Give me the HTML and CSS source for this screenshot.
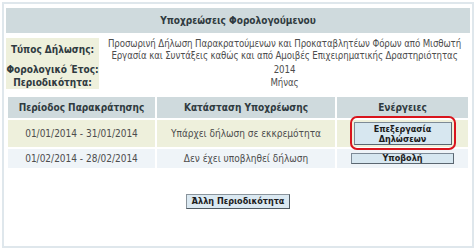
FILE: index.html
```
<!DOCTYPE html>
<html lang="el">
<head>
  <meta charset="UTF-8">
  <meta name="viewport" content="width=device-width, initial-scale=1.0">
  <title>Υποχρεώσεις Φορολογούμενου</title>
  <link rel="stylesheet" href="styles.css">
</head>
<body>
  <div class="frame">
    <div class="title-bar">Υποχρεώσεις Φορολογούμενου</div>

    <table class="info">
      <tr class="info-first">
        <td class="info-label">Τύπος Δήλωσης:</td>
        <td class="info-value">Προσωρινή Δήλωση Παρακρατούμενων και Προκαταβλητέων Φόρων από Μισθωτή<br>Εργασία και Συντάξεις καθώς και από Αμοιβές Επιχειρηματικής Δραστηριότητας</td>
      </tr>
      <tr class="info-year">
        <td class="info-label">Φορολογικό Έτος:</td>
        <td class="info-value">2014</td>
      </tr>
      <tr>
        <td class="info-label">Περιοδικότητα:</td>
        <td class="info-value">Μήνας</td>
      </tr>
    </table>

    <table class="periods">
      <tr class="head-row">
        <th class="col-period">Περίοδος Παρακράτησης</th>
        <th class="col-status">Κατάσταση Υποχρέωσης</th>
        <th>Ενέργειες</th>
      </tr>
      <tr class="row-pending">
        <td>01/01/2014 - 31/01/2014</td>
        <td>Υπάρχει δήλωση σε εκκρεμότητα</td>
        <td>
          <span class="highlight">
            <button type="button" class="btn btn-edit">Επεξεργασία<br>Δηλώσεων</button>
          </span>
        </td>
      </tr>
      <tr class="row-empty">
        <td>01/02/2014 - 28/02/2014</td>
        <td>Δεν έχει υποβληθεί δήλωση</td>
        <td><button type="button" class="btn btn-submit">Υποβολή</button></td>
      </tr>
    </table>

    <div class="bottom-actions">
      <button type="button" class="btn btn-other">Άλλη Περιοδικότητα</button>
    </div>
  </div>
</body>
</html>
```
FILE: styles.css
```
body {
  margin: 0;
  padding: 0;
  background-color: #ffffff;
  font-family: "DejaVu Sans Condensed", "DejaVu Sans", sans-serif;
  font-stretch: condensed;
  font-size: 10px;
  color: #4d4d4d;
}
.frame {
  box-sizing: border-box;
  margin: 2px;
  height: 246px;
  border: 2px solid #dfe7ec;
  padding: 4px 2px;
}
.title-bar {
  height: 25px;
  line-height: 25px;
  background-color: #cfdadd;
  text-align: center;
  font-weight: bold;
  color: #2f3a40;
}
.info {
  width: 100%;
  margin-top: 5px;
  border-collapse: collapse;
}
.info td {
  padding: 0;
  line-height: 12px;
}
.info-label {
  width: 93px;
  background-color: #eef0dc;
  text-align: center;
  font-weight: bold;
  color: #2f3a40;
  white-space: nowrap;
}
.info-value {
  text-align: center;
  padding-left: 3px;
  white-space: nowrap;
  font-size: 9.6px;
  letter-spacing: -0.1px;
}
.info-first td {
  height: 24px;
}
.info-year td {
  height: 14px;
  padding-top: 1px;
}
.periods {
  width: 100%;
  margin-top: 6px;
  border-collapse: separate;
  border-spacing: 2px;
}
.periods th,
.periods td {
  padding: 0;
  text-align: center;
}
.periods th {
  height: 21px;
  background-color: #cfdadd;
  font-weight: bold;
  color: #2f3a40;
}
.col-period {
  width: 147px;
}
.col-status {
  width: 178px;
}
.row-pending td {
  height: 27px;
  background-color: #eef0dc;
}
.row-empty td {
  height: 19px;
  background-color: #eff4f8;
}
.btn {
  font-family: inherit;
  font-stretch: condensed;
  font-size: 9px;
  font-weight: bold;
  color: #1c1c1c;
  background-color: #d7e7f0;
  border: 1px solid #7d8a96;
  border-right-color: #5a6670;
  border-bottom-color: #5a6670;
  padding: 0;
  margin: 0;
  cursor: pointer;
  vertical-align: middle;
  white-space: nowrap;
}
.btn-edit {
  width: 98px;
  height: 23px;
  line-height: 10px;
}
.btn-submit {
  width: 103px;
  height: 11px;
  line-height: 9px;
}
.highlight {
  position: relative;
  display: inline-block;
  vertical-align: middle;
}
.highlight::after {
  content: "";
  position: absolute;
  top: -6px;
  bottom: -5px;
  left: -4px;
  right: -4px;
  border: 2px solid #d9141c;
  border-radius: 7px;
  pointer-events: none;
}
.bottom-actions {
  margin-top: 24px;
  text-align: center;
}
.btn-other {
  width: 104px;
  height: 15px;
  line-height: 13px;
  background-color: #dbe9f2;
  border: 1px solid #8a949c;
  border-right-color: #4f5a62;
  border-bottom-color: #4f5a62;
}
```
